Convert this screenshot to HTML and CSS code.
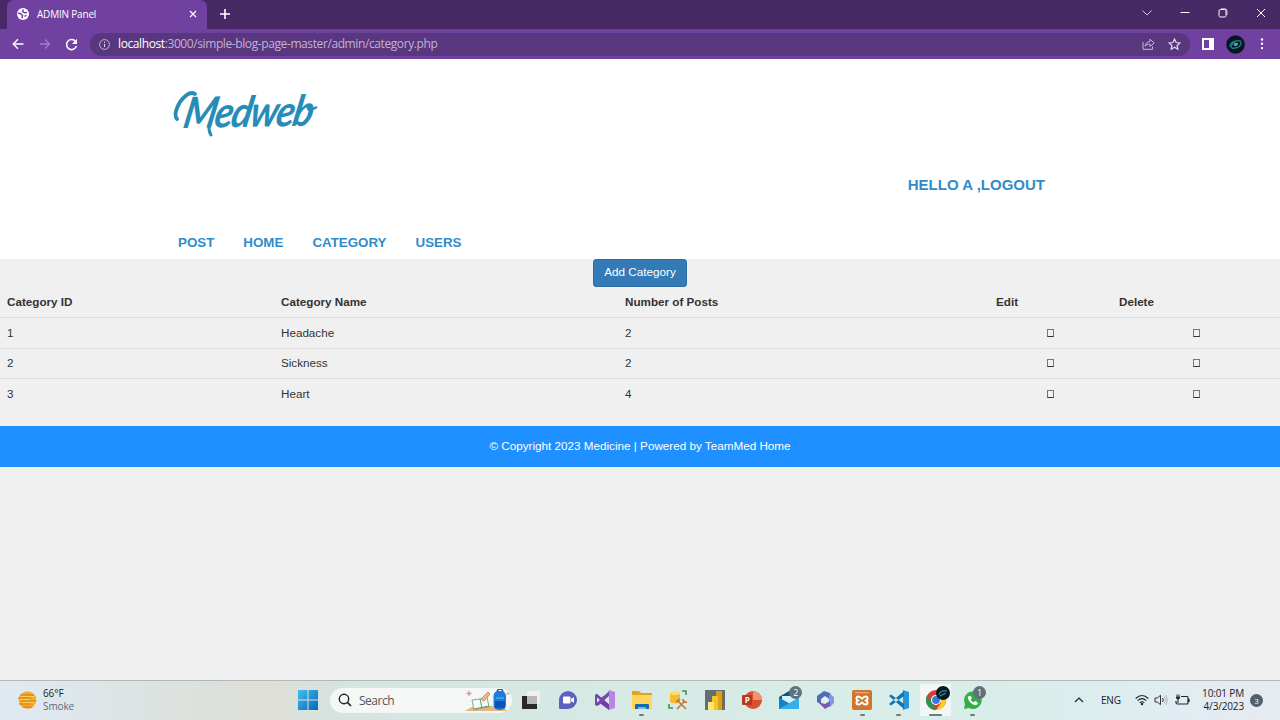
FILE: index.html
```html
<!DOCTYPE html>
<html lang="en">
<head>
<meta charset="utf-8">
<title>ADMIN Panel</title>
<link rel="stylesheet" href="styles.css">
</head>
<body>
<div class="tabs">
  <div class="tab">
    <svg class="globe" width="12" height="12" viewBox="0 0 12 12"><circle cx="6" cy="6" r="6" fill="#fff"/><path d="M1 5.200 3.500 5.500 5.500 7.500 4.800 10.200M6.500 1.500 5.600 3.500 7.500 4.800 10 4.500M7.500 8.300 9.500 7.300" fill="none" stroke="#6f42a0" stroke-width="1.500"/></svg>
    <span class="tab-title">ADMIN Panel</span>
    <svg class="tab-close" width="8" height="8" viewBox="0 0 8 8"><path d="m1 1 6 6M7 1 1 7" stroke="#fff" stroke-width="1.200"/></svg>
  </div>
  <svg class="plus" width="10" height="10" viewBox="0 0 10 10"><path d="M5 0v10M0 5h10" stroke="#fff" stroke-width="1.600"/></svg>
  <div class="window-controls">
    <svg width="10" height="10" viewBox="0 0 10 10"><path d="m.5 2.500 4.500 4.500 4.500-4.500" fill="none" stroke="#d5c9df"/></svg>
    <svg width="10" height="10" viewBox="0 0 10 10"><path d="M.5 4.500h9" stroke="#fff"/></svg>
    <svg width="10" height="10" viewBox="0 0 10 10"><rect x="1" y="1.500" width="7" height="7.500" rx="1.500" fill="none" stroke="#fff"/><path d="M3 .8h4.200Q9 .8 9 3v4" fill="none" stroke="#fff" stroke-width=".7"/></svg>
    <svg width="10" height="10" viewBox="0 0 10 10"><path d="m1 1 8 8M9 1 1 9" stroke="#fff"/></svg>
  </div>
</div>
<div class="toolbar">
  <svg class="back" width="12" height="12" viewBox="0 0 12 12"><path d="M11.500 6H1.500M6 1.200 1.200 6 6 10.800" fill="none" stroke="#fff" stroke-width="1.400"/></svg>
  <svg class="forward" width="12" height="12" viewBox="0 0 12 12"><path d="M1 6h9.500M6 1.500 10.500 6 6 10.500" fill="none" stroke="#a07fc4" stroke-width="1.300"/></svg>
  <svg class="reload" width="13" height="13" viewBox="0 0 13 13"><path d="M10.600 3.600A5 5 0 1 0 11.400 8" fill="none" stroke="#fff" stroke-width="1.500"/><path d="M12 .8V6H7z" fill="#fff"/></svg>
  <div class="address">
    <svg width="11" height="11" viewBox="0 0 11 11"><circle cx="5.500" cy="5.500" r="4.900" fill="none" stroke="#c8b6dc"/><path d="M5.500 5v3M5.500 2.700V4" stroke="#e0d3ed"/></svg>
    <span class="url"><b>localhost</b>:3000/simple-blog-page-master/admin/category.php</span>
    <svg class="share" width="13" height="12" viewBox="0 0 13 12"><path d="M1 4v7.300h9.500V8.500M3 8.200C3.500 5 5.500 3.800 8 3.700V1.200L12.200 5 8 8.500V6.200C5.500 6.100 4.300 6.800 3 8.200z" fill="none" stroke="#c8b6dc"/></svg>
    <svg class="star" width="13" height="12" viewBox="0 0 13 12"><path d="m6.500 1 1.600 3.500 3.900.4-2.900 2.600.8 3.800-3.400-2-3.400 2 .8-3.800L1 4.900l3.900-.4z" fill="none" stroke="#e3d8ef" stroke-width="1.200"/></svg>
  </div>
  <svg class="panel" width="12" height="12" viewBox="0 0 12 12"><path fill="#fff" fill-rule="evenodd" d="M0 0h12v12H0zM2 2h5v8H2z"/></svg>
  <svg class="avatar" width="19" height="19" viewBox="0 0 19 19"><circle cx="9.500" cy="9.500" r="9.300" fill="#0b1520"/><path d="M4 12q0-5 6-6 5-1 5 2 0 4-6 5-4 1-4-2 1-3 5-3" fill="none" stroke="#187a83" stroke-width="1.400"/><ellipse cx="10" cy="9.500" rx="2.200" ry="1.300" fill="#42bbc0" transform="rotate(-25 10 9.500)"/></svg>
  <svg class="more" width="4" height="12" viewBox="0 0 4 12"><g fill="#fff"><circle cx="2" cy="1.500" r="1.200"/><circle cx="2" cy="5.800" r="1.200"/><circle cx="2" cy="10.100" r="1.200"/></g></svg>
</div>

<header class="site-header">
  <div class="logo">
    <svg class="flourish" width="150" height="60" viewBox="0 0 150 60"><g fill="none" stroke="#278db7" stroke-linecap="round"><path d="M6 34Q2 29 9 17 18 5 24 9" stroke-width="3.800"/><path d="M38 40q-.5 6 2 10" stroke-width="3"/><path d="M137 24q4 1 8-1.500" stroke-width="2.600"/></g></svg>
    <span>Medweb</span>
  </div>
  <a class="logout">HELLO A ,LOGOUT</a>
  <nav class="menu"><a>POST</a><a>HOME</a><a>CATEGORY</a><a>USERS</a></nav>
</header>
<main class="content">
  <div class="actions"><a class="btn">Add Category</a></div>
  <table class="categories">
    <colgroup><col class="c-id"><col class="c-name"><col class="c-posts"><col class="c-edit"><col class="c-delete"></colgroup>
    <thead><tr><th>Category ID</th><th>Category Name</th><th>Number of Posts</th><th>Edit</th><th>Delete</th></tr></thead>
    <tbody>
      <tr><td>1</td><td>Headache</td><td>2</td><td class="icon"><i></i></td><td class="icon"><i></i></td></tr>
      <tr><td>2</td><td>Sickness</td><td>2</td><td class="icon"><i></i></td><td class="icon"><i></i></td></tr>
      <tr><td>3</td><td>Heart</td><td>4</td><td class="icon"><i></i></td><td class="icon"><i></i></td></tr>
    </tbody>
  </table>
  <footer class="copyright">© Copyright 2023 Medicine | Powered by TeamMed Home</footer>
</main>

<div class="taskbar">
  <div class="weather">
    <svg width="20" height="20" viewBox="0 0 20 20"><circle cx="10.500" cy="10" r="8.800" fill="#f4ad28"/><path d="M3 5h14M1 8h13M4 11h15M2 14h12M6 17h9" stroke="#d87918" stroke-width="1.200"/><path d="M4 6.500h13M3 9.500h10M5 12.500h13" stroke="#ffd15c"/></svg>
    <div class="weather-text"><span>66°F</span><span class="dim">Smoke</span></div>
  </div>
  <svg class="start" width="20" height="20" viewBox="0 0 20 20"><defs><linearGradient id="win" x2="1" y2="1"><stop stop-color="#42bdf0"/><stop offset="1" stop-color="#0866b8"/></linearGradient></defs><path fill="url(#win)" d="M0 0h9.500v9.500H0zM10.500 0H20v9.500h-9.500zM0 10.500h9.500V20H0zM10.500 10.500H20V20h-9.500z"/></svg>
  <div class="search">
    <svg width="14" height="14" viewBox="0 0 14 14"><circle cx="6" cy="6" r="4.700" fill="none" stroke="#222" stroke-width="1.400"/><path d="m9.400 9.400 3.600 3.600" stroke="#222" stroke-width="1.600"/></svg>
    <span>Search</span>
    <svg class="search-art" width="46" height="23" viewBox="0 0 46 23"><path d="M0 22q8-6 18-5h14q7 0 10 5z" fill="#e5b77d"/><path d="m7 11 8-1 7-2 2 10-7 1-8 2z" fill="#f5fbf5" stroke="#7fa9a0"/><path d="m15 10 2 9M9 20l15-3" stroke="#679a62"/><path d="m16 10 7-7 2 2-6 7z" fill="#f0b48c" stroke="#d68c52"/><path d="M4 2v5M1.500 4.500h5" stroke="#d68bd4" stroke-width="1.300"/><path d="M43 3v3M41.500 4.500h3" stroke="#d9b56e"/><path d="M32 4q0-4 3-4t3 4" fill="none" stroke="#164c99" stroke-width="1.300"/><rect x="28.500" y="2" width="12.500" height="19" rx="5" fill="#1c7de0"/><path d="M30 12h10v7H30z" fill="#0b56b4"/><path d="M31 9h8" stroke="#65b9f7"/></svg>
  </div>
  <div class="apps">
    <div class="app"><svg viewBox="0 0 20 20"><path d="M1 6h15v13H1z" fill="#292929"/><path d="M6 1h13v13H6z" fill="#f0f0f0"/><path d="M6 6h10v8H6z" fill="#b8b8b8"/></svg></div>
    <div class="app"><svg viewBox="0 0 20 20"><path d="M10 1a9 9 0 1 1 0 18H2q-1 0-1-1v-8a9 9 0 0 1 9-9z" fill="#5b62bd"/><rect x="5" y="6.500" width="7.500" height="7" rx="1" fill="#fff"/><path d="m13 9 3-2v6l-3-2z" fill="#fff"/></svg></div>
    <div class="app"><svg viewBox="0 0 20 20"><path d="m0 5 2-1 12 10V20L2 11 4 8z" fill="#7040aa"/><path d="m0 5 2-1 3.500 4L10 5l5-5v6L4 15l-2 1-2-1z" fill="#7646b1"/><path d="m2 7.500 3 2.500-3 2.500z" fill="#deebe7"/><path d="m14 0 6 2v16l-6 2z" fill="#b985e3"/><path d="m9.500 10 4.500-4v8z" fill="#deebe7"/></svg></div>
    <div class="app running"><svg viewBox="0 0 20 20"><path d="M0 1h7l2 2h11v16H0z" fill="#e0a125"/><path d="M0 5h20v14H0z" fill="#ffd65a"/><path d="M3 19v-4q0-1 1-1h12q1 0 1 1v4z" fill="#126cb0"/><path d="M6 17h8v2H6z" fill="#79b6d8"/></svg></div>
    <div class="app"><svg viewBox="0 0 20 20"><path d="M2 3v9q5 3 10 0V3z" fill="#f3bd32"/><ellipse cx="7" cy="3" rx="5" ry="2" fill="#ffdd67"/><path d="M14 1h4v4M1 14v4h4" fill="none" stroke="#36934a" stroke-width="1.500"/><path d="m9 19 8-8M10 11l8 8" fill="none" stroke="#c3773a" stroke-width="1.600"/><path d="m8 12 4-3M15 9q0 4 4 3" fill="none" stroke="#c3773a" stroke-width="1.800"/></svg></div>
    <div class="app"><svg viewBox="0 0 20 20"><path d="M0 0h20v20H0z" fill="#626e74"/><path d="M11 1h6v19h-6z" fill="#d8a315"/><path d="M7 6h6v14H7z" fill="#f0c52b"/><path d="M3 12h6v8H3z" fill="#ffe66f"/><path d="M17 1h2v19h-2z" fill="#816f35"/></svg></div>
    <div class="app"><svg viewBox="0 0 20 20"><circle cx="11" cy="10" r="9" fill="#d9512c"/><path d="M11 1a9 9 0 0 1 9 9h-9z" fill="#f49272"/><rect y="5" width="10" height="10" rx="1" fill="#b93520"/><text x="2.800" y="13" class="ppt">P</text></svg></div>
    <div class="app"><svg viewBox="0 0 20 20"><path d="m0 7 10-6 10 6v12H0z" fill="#125687"/><path d="M3 6h14v4l-7 4-7-4z" fill="#d8f1fc"/><path d="M0 7.500 20 19H0z" fill="#1583c8"/><path d="M20 7.500 0 19h20z" fill="#35afe5"/></svg><span class="badge">2</span></div>
    <div class="app"><svg viewBox="0 0 20 20"><path d="m9 1 6 2 3 5-4 1-4-3-4 3v5L2 12V6z" fill="#506eb8"/><path d="m14 4 5 3v6l-4 4-4-2 3-3z" fill="#8099df"/><path d="m3 12 7 2 5-3v5l-5 3z" fill="#7b59b3"/><circle cx="10" cy="10" r="3" fill="#e4edf0"/></svg></div>
    <div class="app running"><svg viewBox="0 0 20 20"><rect width="20" height="20" rx="2" fill="#cf762b"/><path d="M6.500 6.500Q4.500 6.500 4.500 8.500T6.500 10.500Q4.500 10.500 4.500 12.500T6.500 14.500Q8 14.500 10 12.300 12 14.500 13.500 14.500 15.500 14.500 15.500 12.500T13.500 10.500Q15.500 10.500 15.500 8.500T13.500 6.500Q12 6.500 10 8.700 8 6.500 6.500 6.500z" fill="none" stroke="#fff" stroke-width="2" stroke-linejoin="round"/><path d="M3 2.700h14" stroke="#edbb8e"/></svg></div>
    <div class="app running"><svg viewBox="0 0 20 20"><path d="m14 0 6 2v16l-6 2z" fill="#2895d5"/><path d="m0 6 2-1.500L15 14v5zM0 14l2 1.500L15 6V1z" fill="#0878ba"/></svg></div>
    <div class="app active"><svg viewBox="0 0 20 20"><circle cx="10" cy="10" r="10" fill="#dc3c32"/><path d="M1.300 5 6 13l4 7A10 10 0 0 1 1.300 5z" fill="#279650"/><path d="M10 20A10 10 0 0 0 19 6h-9l5 7z" fill="#ffcb28"/><circle cx="10" cy="10" r="5" fill="#fff"/><circle cx="10" cy="10" r="3.900" fill="#347cdb"/></svg><svg class="chrome-user" viewBox="0 0 14 14"><circle cx="7" cy="7" r="7" fill="#071820"/><path d="M3 9q1-5 8-4M4 10l6-3" fill="none" stroke="#177d89" stroke-width="1.500"/></svg></div>
    <div class="app running"><svg viewBox="0 0 20 20"><path d="M2 19 3 14a8.800 8.800 0 1 1 4 4z" fill="#37ad48"/><path d="M7 6q-3 1 1 6t8 2l-1-2-2-1-1.500 1.500Q9.500 11.500 8.500 9.500L10 8 8.500 6z" fill="#fff"/></svg><span class="badge">1</span></div>
  </div>
  <div class="tray">
    <svg class="chevron" width="10" height="8" viewBox="0 0 10 8"><path d="m1 6 4-4 4 4" fill="none" stroke="#222" stroke-width="1.200"/></svg>
    <span class="lang">ENG</span>
    <svg class="wifi" width="14" height="12" viewBox="0 0 14 12"><g fill="none" stroke="#222" stroke-width="1.100"><path d="M.7 4.500q6.300-6 12.600 0M2.700 6.700q4.300-4 8.600 0M4.700 8.800q2.300-2 4.600 0"/></g><circle cx="7" cy="10" r="1.200" fill="#222"/></svg>
    <svg class="sound" width="14" height="12" viewBox="0 0 14 12"><path d="M1 4h2.300l3.200-2.700v9.400L3.300 8H1z" fill="none" stroke="#333"/><path d="M8.500 4q1.500 2 0 4" fill="none" stroke="#333"/><path d="M10.300 2.500q2.500 3.500 0 7M12 1q2.500 5 0 10" fill="none" stroke="#a6afb1" stroke-width=".8"/></svg>
    <svg class="battery" width="15" height="12" viewBox="0 0 15 12"><path d="M6 2.500h6q1 0 1 1V9q0 1-1 1H2.500Q1 10 1 8.500V7M14 5v3" fill="none" stroke="#222" stroke-width="1.200"/><path d="M2 .5v2M4 .5v2M3 5v4" stroke="#222"/><path d="M1 2.500h4V4q-2 3-4 0z" fill="#222"/></svg>
    <div class="clock"><span class="time">10:01 PM</span><span class="date">4/3/2023</span></div>
    <span class="notice">3</span>
  </div>
</div>
</body>
</html>
```
FILE: styles.css
```css
* { box-sizing: border-box; }
body { margin: 0; height: 720px; overflow: hidden; display: flex; flex-direction: column; background: #f0f0f0; font-family: "Liberation Sans", Arial, sans-serif; color: #333; }
svg { display: block; flex: none; }
.tabs { height: 29px; flex: none; display: flex; background: #472966; color: #fff; padding-left: 7px; font-family: "Open Sans", sans-serif; }
.tab { width: 200px; background: #7041a1; border-radius: 7px 7px 0 0; display: flex; align-items: center; padding: 0 10px 1px; }
.tab-title { font-size: 10px; margin: -1px 0 0 8px; flex: 1; letter-spacing: -.2px; }
.plus { margin: 9px 0 0 13px; }
.window-controls { margin: 8px 14px 0 auto; display: flex; gap: 28px; }
.toolbar { height: 30px; flex: none; display: flex; align-items: center; background: #7041a1; padding: 0 16px 0 12px; }
.forward { margin-left: 15px; }
.reload { margin-left: 14px; }
.address { width: 1100px; height: 23px; margin-left: 12px; border-radius: 12px; background: #59377e; display: flex; align-items: center; padding: 0 9px; color: #c4b0d8; font: 12px "Open Sans", sans-serif; }
.url { margin: -1px 0 0 8px; flex: 1; letter-spacing: -.4px; }
.url b { font-weight: 400; color: #fff; }
.share { margin-right: 13px; }
.panel { margin-left: 12px; }
.avatar { margin-left: 12px; }
.more { margin-left: auto; }
.site-header { height: 200px; flex: none; background: #fff; display: grid; grid-template-rows: 110px 56px 34px; padding-left: 171px; color: #318bcb; font-weight: 700; }
.logo { position: relative; display: flex; align-items: center; font: italic 700 43px/1 "Lato", sans-serif; color: #278db7; }
.flourish { position: absolute; left: 0; top: 26px; }
.logo span { transform: skewX(-12deg) rotate(-1deg) scaleX(.88); transform-origin: left center; letter-spacing: -2px; margin: -5px 0 0 14px; }
.logout { justify-self: end; margin: 7px 235px 0 0; font-size: 15px; line-height: 18px; }
.menu { display: flex; gap: 29px; padding: 9px 0 0 7px; font-size: 13.35px; line-height: 17px; }
.actions { display: flex; justify-content: center; }
.btn { width: 94px; height: 28px; border: 1px solid #2e6da4; border-radius: 3px; background: #337ab7; color: #fff; font-size: 11.7px; line-height: 24px; text-align: center; }
.categories { width: 100%; table-layout: fixed; border-collapse: collapse; font-size: 11.667px; }
.categories th, .categories td { height: 30.67px; padding: 0 7px 1px; text-align: left; vertical-align: middle; line-height: 16px; border-bottom: 1px solid #dcdcdc; }
.categories tbody tr:first-child td { padding-bottom: 0; }
.categories tbody tr:last-child td { border-bottom: 0; padding-bottom: 2px; }
.c-id { width: 274px; } .c-name { width: 344px; } .c-posts { width: 371px; } .c-edit { width: 123px; } .c-delete { width: 168px; }
.categories td.icon { padding-left: 0; padding-right: 0; }
.icon i { display: block; width: 7px; height: 8px; margin: 0 auto; border: 1px solid #777; border-bottom-color: #333; }
.copyright { height: 41px; margin-top: 16px; background: #1e90ff; color: #fff; font-size: 11.7px; line-height: 40px; text-align: center; }
.taskbar { height: 40px; margin-top: auto; flex: none; display: flex; align-items: center; border-top: 1px solid #b1b9b9; padding-bottom: 1px; background: linear-gradient(90deg, #dfeaf3 0, #dce2df 13%, #dedfd7 21%, #d5e4df 27%, #d7eae5 50%, #d9eeeb 80%, #dfedf1 90%, #e7eaf1 100%); font-family: "Open Sans", sans-serif; color: #222; }
.weather { width: 281px; display: flex; align-items: center; gap: 6px; padding-left: 17px; margin-top: -1px; }
.weather-text { display: flex; flex-direction: column; font-size: 10px; line-height: 13px; letter-spacing: -.1px; }
.dim { color: #606b73; }
.start { margin-left: 17px; }
.search { width: 182px; height: 25px; margin-left: 12px; border-radius: 13px; background: #f4f7f6; display: flex; align-items: center; padding: 0 1px 0 8px; font-size: 12px; color: #555; }
.search span { margin-left: 7px; flex: 1; letter-spacing: -.5px; }
.apps { display: flex; margin-left: 1px; }
.app { position: relative; width: 36.75px; height: 32px; display: flex; align-items: center; justify-content: center; }
.app > svg { width: 20px; height: 20px; }
.running::after, .active::after { content: ""; position: absolute; bottom: 0; width: 5px; height: 2px; border-radius: 1px; background: #727b7b; }
.active { background: linear-gradient(90deg, transparent 3px, #f2f6f5 3px, #f2f6f5 34px, transparent 34px); }
.active::after { width: 13px; }
.badge { position: absolute; left: 19px; top: 2px; width: 13px; height: 13px; border-radius: 50%; background: #61717b; color: #fff; font-size: 9px; line-height: 13px; text-align: center; }
.app > .chrome-user { position: absolute; left: 19px; top: 2px; width: 14px; height: 14px; }
.ppt { font: 700 8px "Open Sans", sans-serif; fill: #fff; }
.tray { display: flex; align-items: center; margin-left: auto; padding-right: 17px; font-size: 10px; }
.lang { margin-left: 17px; width: 20px; letter-spacing: -.2px; }
.wifi { margin-left: 14px; }
.sound { margin-left: 5px; }
.battery { margin-left: 7px; }
.clock { width: 43px; margin-left: 11px; display: flex; flex-direction: column; line-height: 13px; text-align: right; letter-spacing: -.15px; white-space: nowrap; }
.notice { width: 13px; height: 13px; margin-left: 6px; border-radius: 50%; background: #4d6270; color: #fff; font-size: 8px; line-height: 13px; text-align: center; }
```
